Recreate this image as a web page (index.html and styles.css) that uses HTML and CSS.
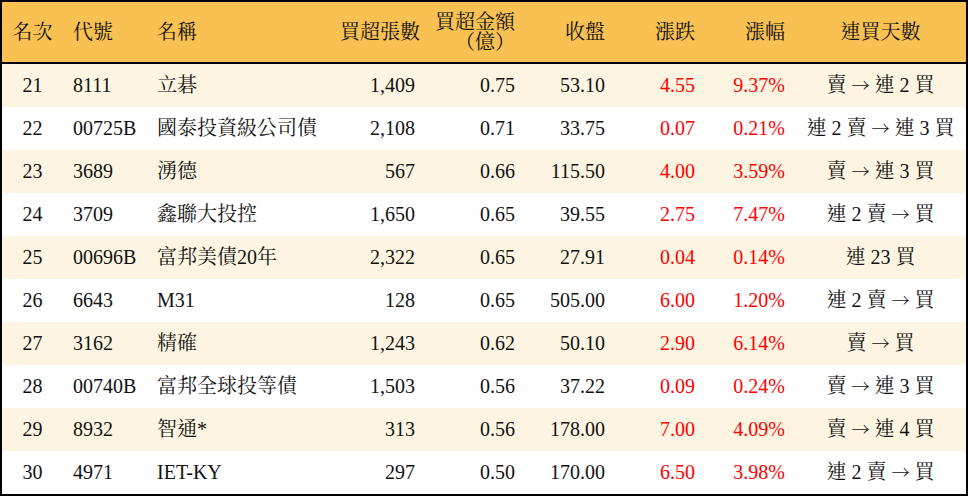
FILE: index.html
```html
<!DOCTYPE html>
<html lang="zh-Hant">
<head>
<meta charset="utf-8">
<title>買超排行</title>
<link rel="stylesheet" href="styles.css">
</head>
<body>
<div class="board">
<table class="rank">
<colgroup>
<col class="c-rank"><col class="c-code"><col class="c-name"><col class="c-vol"><col class="c-amt"><col class="c-close"><col class="c-chg"><col class="c-pct"><col class="c-days">
</colgroup>
<thead>
<tr>
<th class="ctr">名次</th>
<th class="lft">代號</th>
<th class="lft">名稱</th>
<th class="rgt">買超張數</th>
<th class="rgt">買超金額<br>（億）</th>
<th class="rgt">收盤</th>
<th class="rgt">漲跌</th>
<th class="rgt">漲幅</th>
<th class="ctr">連買天數</th>
</tr>
</thead>
<tbody>
<tr class="alt"><td class="ctr">21</td><td class="lft">8111</td><td class="lft">立碁</td><td class="rgt">1,409</td><td class="rgt">0.75</td><td class="rgt">53.10</td><td class="rgt up">4.55</td><td class="rgt up">9.37%</td><td class="ctr">賣 <span class="arr">→</span> 連 2 買</td></tr>
<tr><td class="ctr">22</td><td class="lft">00725B</td><td class="lft">國泰投資級公司債</td><td class="rgt">2,108</td><td class="rgt">0.71</td><td class="rgt">33.75</td><td class="rgt up">0.07</td><td class="rgt up">0.21%</td><td class="ctr">連 2 賣 <span class="arr">→</span> 連 3 買</td></tr>
<tr class="alt"><td class="ctr">23</td><td class="lft">3689</td><td class="lft">湧德</td><td class="rgt">567</td><td class="rgt">0.66</td><td class="rgt">115.50</td><td class="rgt up">4.00</td><td class="rgt up">3.59%</td><td class="ctr">賣 <span class="arr">→</span> 連 3 買</td></tr>
<tr><td class="ctr">24</td><td class="lft">3709</td><td class="lft">鑫聯大投控</td><td class="rgt">1,650</td><td class="rgt">0.65</td><td class="rgt">39.55</td><td class="rgt up">2.75</td><td class="rgt up">7.47%</td><td class="ctr">連 2 賣 <span class="arr">→</span> 買</td></tr>
<tr class="alt"><td class="ctr">25</td><td class="lft">00696B</td><td class="lft">富邦美債20年</td><td class="rgt">2,322</td><td class="rgt">0.65</td><td class="rgt">27.91</td><td class="rgt up">0.04</td><td class="rgt up">0.14%</td><td class="ctr">連 23 買</td></tr>
<tr><td class="ctr">26</td><td class="lft">6643</td><td class="lft">M31</td><td class="rgt">128</td><td class="rgt">0.65</td><td class="rgt">505.00</td><td class="rgt up">6.00</td><td class="rgt up">1.20%</td><td class="ctr">連 2 賣 <span class="arr">→</span> 買</td></tr>
<tr class="alt"><td class="ctr">27</td><td class="lft">3162</td><td class="lft">精確</td><td class="rgt">1,243</td><td class="rgt">0.62</td><td class="rgt">50.10</td><td class="rgt up">2.90</td><td class="rgt up">6.14%</td><td class="ctr">賣 <span class="arr">→</span> 買</td></tr>
<tr><td class="ctr">28</td><td class="lft">00740B</td><td class="lft">富邦全球投等債</td><td class="rgt">1,503</td><td class="rgt">0.56</td><td class="rgt">37.22</td><td class="rgt up">0.09</td><td class="rgt up">0.24%</td><td class="ctr">賣 <span class="arr">→</span> 連 3 買</td></tr>
<tr class="alt"><td class="ctr">29</td><td class="lft">8932</td><td class="lft">智通*</td><td class="rgt">313</td><td class="rgt">0.56</td><td class="rgt">178.00</td><td class="rgt up">7.00</td><td class="rgt up">4.09%</td><td class="ctr">賣 <span class="arr">→</span> 連 4 買</td></tr>
<tr><td class="ctr">30</td><td class="lft">4971</td><td class="lft">IET-KY</td><td class="rgt">297</td><td class="rgt">0.50</td><td class="rgt">170.00</td><td class="rgt up">6.50</td><td class="rgt up">3.98%</td><td class="ctr">連 2 賣 <span class="arr">→</span> 買</td></tr>
</tbody>
</table>
</div>
</body>
</html>
```
FILE: styles.css
```css
html, body {
  margin: 0;
  padding: 0;
  background: #ffffff;
}

.board {
  width: 968px;
  height: 496px;
  box-sizing: border-box;
  border: 2px solid #000;
  overflow: hidden;
}

.rank {
  width: 964px;
  table-layout: fixed;
  border-collapse: separate;
  border-spacing: 0;
  font-family: "Liberation Serif", "Noto Serif CJK TC", "Noto Sans CJK TC", serif;
  font-size: 20px;
  color: #111;
}

.c-rank { width: 61px; }
.c-code { width: 84px; }
.c-name { width: 183px; }
.c-vol { width: 95px; }
.c-amt { width: 100px; }
.c-close { width: 90px; }
.c-chg { width: 90px; }
.c-pct { width: 90px; }
.c-days { width: 171px; }

.rank th {
  background: #f8c152;
  font-weight: normal;
  line-height: 20px;
  height: 40px;
  padding: 10px 10px;
  border-bottom: 2px solid #000;
  white-space: nowrap;
}

.rank td {
  line-height: 23px;
  height: 23px;
  padding: 10px 10px;
  white-space: nowrap;
}

.rank tr.alt td {
  background: #fdf5e2;
}

.ctr { text-align: center; }
.lft { text-align: left; }
.rgt { text-align: right; }

.rank th.ctr, .rank td.ctr {
  padding-left: 0;
  padding-right: 0;
}

.arr {
  font-family: "Noto Serif CJK TC", "Noto Sans CJK TC", serif;
  font-size: 18px;
  line-height: 1px;
}

.up { color: #ff0000; }
```
